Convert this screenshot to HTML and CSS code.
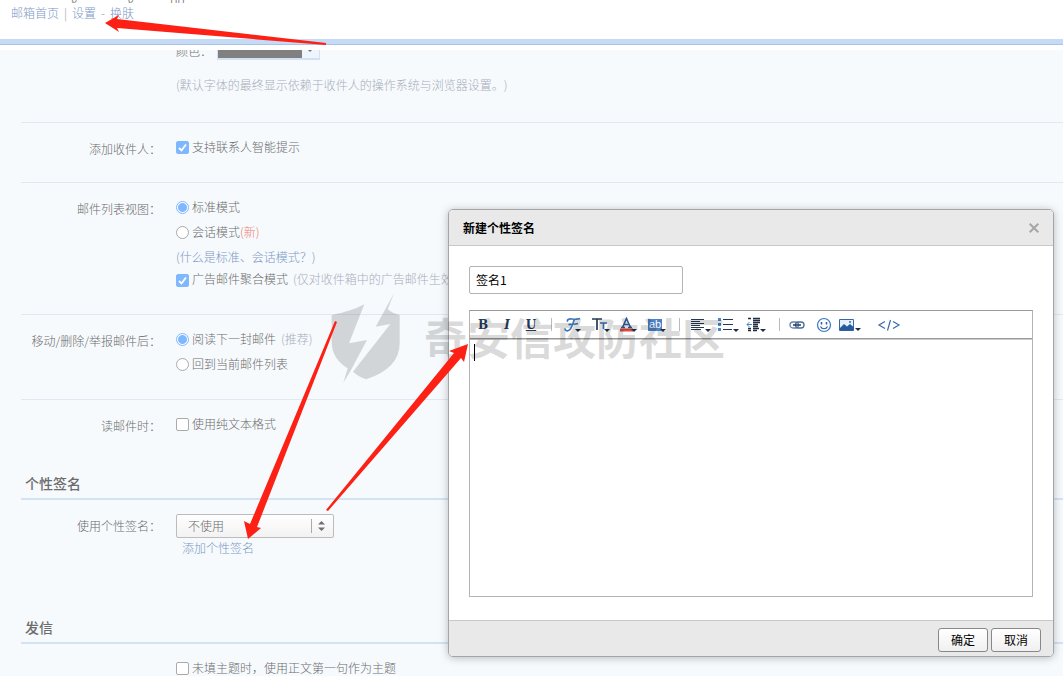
FILE: index.html
```html
<!DOCTYPE html>
<html lang="zh-CN">
<head>
<meta charset="utf-8">
<title>邮箱设置</title>
<link rel="stylesheet" href="styles.css">
</head>
<body>
<header class="top">
  <div class="account"><span>g</span><span>g</span><span>pp</span></div>
  <nav class="nav"><a href="#">邮箱首页</a><span>|</span><a href="#">设置</a><span>-</span><a href="#">换肤</a></nav>
</header>
<main class="settings">
  <div class="row row-color">
    <span class="label">颜色：</span>
    <div class="field">
      <button class="swatch" type="button" aria-label="颜色"><span class="swatch-fill"></span><span class="swatch-arrow"></span></button>
      <p class="muted note">(默认字体的最终显示依赖于收件人的操作系统与浏览器设置。)</p>
    </div>
  </div>
  <div class="row">
    <span class="label">添加收件人：</span>
    <div class="field"><label class="option"><input type="checkbox" checked><span>支持联系人智能提示</span></label></div>
  </div>
  <div class="row">
    <span class="label">邮件列表视图：</span>
    <div class="field">
      <label class="option"><input type="radio" name="view" checked><span>标准模式</span></label>
      <label class="option"><input type="radio" name="view"><span>会话模式</span><span class="new">(新)</span></label>
      <a class="help" href="#">(什么是标准、会话模式？)</a>
      <label class="option compact"><input type="checkbox" checked><span>广告邮件聚合模式</span><span class="muted gap">(仅对收件箱中的广告邮件生效)</span></label>
    </div>
  </div>
  <div class="row">
    <span class="label">移动/删除/举报邮件后：</span>
    <div class="field">
      <label class="option"><input type="radio" name="after" checked><span>阅读下一封邮件</span><span class="muted gap">(推荐)</span></label>
      <label class="option"><input type="radio" name="after"><span>回到当前邮件列表</span></label>
    </div>
  </div>
  <div class="row">
    <span class="label">读邮件时：</span>
    <div class="field"><label class="option"><input type="checkbox"><span>使用纯文本格式</span></label></div>
  </div>
  <h2 class="section">个性签名</h2>
  <div class="row row-sign">
    <label class="label" for="sign">使用个性签名：</label>
    <div class="field">
      <div class="select-wrap">
        <select id="sign"><option>不使用</option></select>
        <svg class="select-icon" width="20" height="16" viewBox="0 0 20 16"><path d="M.5 1v14" stroke="#aaa"/><path d="M7 6.500L10.500 3 14 6.500zM7 9.500L10.500 13 14 9.500z" fill="#707070"/></svg>
      </div>
      <a class="add" href="#">添加个性签名</a>
    </div>
  </div>
  <h2 class="section">发信</h2>
  <div class="row row-send">
    <span></span>
    <div class="field"><label class="option"><input type="checkbox"><span>未填主题时，使用正文第一句作为主题</span></label></div>
  </div>
</main>

<section class="dialog" role="dialog" aria-labelledby="dialog-title">
  <header class="dialog-head">
    <h1 id="dialog-title">新建个性签名</h1>
    <button class="close" type="button" aria-label="关闭"><svg width="10" height="10" viewBox="0 0 10 10"><path d="M.7.700l8.600 8.600M9.300.700L.700 9.300" stroke="#a6a6a6" stroke-width="2"/></svg></button>
  </header>
  <div class="dialog-body">
    <input class="name" type="text" value="签名1" aria-label="签名名称">
    <div class="editor">
      <div class="toolbar">
        <button class="tool serif bold" type="button" aria-label="加粗">B</button>
        <button class="tool serif italic" type="button" aria-label="斜体">I</button>
        <button class="tool serif under" type="button" aria-label="下划线">U</button>
        <span class="sep"></span>
        <button class="tool wide" type="button" aria-label="字体"><svg width="20" height="16" viewBox="0 0 20 16"><path d="M5 4.500C3 3 6 1.500 9 2c3 .500 5 .500 8-.500M11.500 2.500C10 5 9 12.500 5.500 13.500 3.500 14.300 1.500 13 2.500 11.500M5.500 7.800C9 6.500 11 8 15 6.500" fill="none" stroke="#3d78bd" stroke-width="1.700"/><path d="M12 12h6l-3 3z" fill="#1d2f4b"/></svg></button>
        <button class="tool wide" type="button" aria-label="字号"><svg width="20" height="16" viewBox="0 0 20 16"><path d="M1 2h10M6 2v11" stroke="#263a56" stroke-width="1.700"/><path d="M9 6h7M12.500 6v6" stroke="#3976bd" stroke-width="1.700"/><path d="M13 12h6l-3 3z" fill="#1d2f4b"/></svg></button>
        <button class="tool wide" type="button" aria-label="文字颜色"><svg width="20" height="16" viewBox="0 0 20 16"><path d="M3.500 10.500L7.500 1.500l4 9M5 7.500h5M2 10.500h4M9 10.500h4" fill="none" stroke="#315f9c" stroke-width="1.600"/><path d="M1 11.500h13v3H1z" fill="#e14942"/><path d="M12 12h6l-3 3z" fill="#1d2f4b"/></svg></button>
        <button class="tool wide" type="button" aria-label="背景颜色"><span class="mark">ab</span><svg class="mark-arrow" width="6" height="3" viewBox="0 0 6 3"><path d="M0 0h6L3 3z" fill="#1d2f4b"/></svg></button>
        <span class="sep"></span>
        <button class="tool wide" type="button" aria-label="对齐"><svg width="22" height="16" viewBox="0 0 22 16"><path d="M1 2.500h13M1 4.500h9M1 6.500h13M1 8.500h9M1 10.500h13M1 12.500h10" stroke="#25384f"/><path d="M15 12h6l-3 3z" fill="#1d2f4b"/></svg></button>
        <button class="tool wide" type="button" aria-label="列表"><svg width="22" height="16" viewBox="0 0 22 16"><path d="M5 2.500h10M5 7.500h10M5 12.500h9" stroke="#25384f"/><path d="M0 1h3v3H0zM0 6h3v3H0zM0 11h3v3H0z" fill="#4b87c8"/><path d="M15 12h6l-3 3z" fill="#1d2f4b"/></svg></button>
        <button class="tool wide" type="button" aria-label="缩进"><svg width="22" height="16" viewBox="0 0 22 16"><path d="M2 1.500h3M7 1.500h7M7 3.500h7M7 5.500h7M7 7.500h5M7 9.500h5M2 11.500h3M7 11.500h6M2 13.500h3M7 13.500h4" stroke="#1e2d40" stroke-width="1.300"/><path d="M6 7.500H1M3.500 5L1 7.500 3.500 10" fill="none" stroke="#4b87c8"/><path d="M14 12h6l-3 3z" fill="#1d2f4b"/></svg></button>
        <span class="sep"></span>
        <button class="tool link" type="button" aria-label="链接"><svg width="16" height="16" viewBox="0 0 16 16"><rect x="1" y="5" width="8.500" height="6" rx="3" fill="none" stroke="#6784ac" stroke-width="1.300"/><rect x="6.500" y="5" width="8.500" height="6" rx="3" fill="none" stroke="#4a6a97" stroke-width="1.300"/><path d="M4 8h8" stroke="#263b58" stroke-width="1.500"/></svg></button>
        <button class="tool" type="button" aria-label="表情"><svg width="16" height="16" viewBox="0 0 16 16"><circle cx="8" cy="8" r="6.500" fill="#f8fbff" stroke="#3e77bd" stroke-width="1.200"/><path d="M5.500 5v2.500M10.500 5v2.500" stroke="#315f9c" stroke-width="1.500"/><path d="M4.500 9.500c1.500 3 5.500 3 7 0" fill="none" stroke="#315f9c" stroke-width="1.200"/></svg></button>
        <button class="tool wide" type="button" aria-label="图片"><svg width="22" height="16" viewBox="0 0 22 16"><path d="M.500 2.500h14v11H.500z" fill="#e8f2fe" stroke="#3569aa"/><path d="M1 11l4-4 3 2.500L11 7l3.500 3v3.500H1z" fill="#285b9c"/><circle cx="11" cy="5" r="1" fill="#3569aa"/><path d="M16 11h6l-3 3z" fill="#1d2f4b"/></svg></button>
        <button class="tool code" type="button" aria-label="源代码"><svg width="24" height="16" viewBox="0 0 24 16"><path d="M8 4.500L2 8l6 3.500M16 4.500L22 8l-6 3.500M13.500 3l-3 10.500" fill="none" stroke="#3a6aae" stroke-width="1.200"/></svg></button>
      </div>
      <div class="canvas" role="textbox" aria-label="签名内容"><span class="caret"></span></div>
    </div>
  </div>
  <footer class="dialog-foot"><button class="btn" type="button">确定</button><button class="btn" type="button">取消</button></footer>
</section>

<div class="watermark">
  <svg width="90" height="95" viewBox="0 0 270 285"><path d="M20 75Q80 64 118 43L72 160l54-10L78 240 55 278 68 235Q20 205 20 155zM207 10L188 58q14 12 36 17v85q0 75-100 108-24-8-40-23L196 102l-44 8z" fill="currentColor"/></svg>
  <span>奇安信攻防社区</span>
</div>
<svg class="arrows" width="1063" height="676" viewBox="0 0 1063 676" fill="#fc2114">
  <path d="M105 23L119 15 117 19 326 43v2L117 28l2 4z"/>
  <path d="M248 539L244 521l6 3L335 321l2 1L257 527l4 1z"/>
  <path d="M468 344L449 351l5 2L326 510l2 1L461 358l3 4z"/>
</svg>
</body>
</html>
```

FILE: styles.css
```css
* { box-sizing: border-box; }
body {
  position: relative;
  height: 100vh;
  margin: 0;
  overflow: hidden;
  background: #f6fafd;
  color: #6c6c6c;
  font: 12px/20px "Noto Sans CJK SC", sans-serif;
  font-weight: 300;
  text-spacing-trim: space-all;
}
h1, h2, p { margin: 0; }
a { color: #7c98c4; text-decoration: none; }
button, input, select { font: inherit; }
.top {
  height: 45px;
  background: #fff;
  border-bottom: 1px solid #a9c4e6;
  box-shadow: inset 0 -5px #c5daf5;
}
.account {
  display: flex;
  height: 3px;
  padding-left: 71px;
  gap: 50px;
  overflow: hidden;
  line-height: 0;
  color: #666;
}
.account span:last-child { margin-left: -14px; }
.nav { display: flex; gap: 5px; padding-left: 11px; color: #9a9aa5; }
.settings {
  border-top: 5px solid #fff;
  padding-left: 21px;
  overflow: hidden;
}
.row {
  display: grid;
  grid-template-columns: 140px 1fr;
  column-gap: 15px;
  padding: 12px 0 22px;
  border-top: 1px solid #e0e8f1;
}
.label { text-align: right; padding-top: 4px; }
.field { display: flex; flex-direction: column; align-items: flex-start; }
.option { display: flex; align-items: center; height: 25px; }
.option span { padding-bottom: 2px; }
.option input {
  appearance: none;
  width: 13px;
  height: 13px;
  margin: 0 3px 0 0;
  border: 1px solid #aaa;
  border-radius: 2px;
  background: #fff;
}
.option input[type="radio"] { border-radius: 50%; }
.option input[type="checkbox"]:checked {
  border-color: #80b8ff;
  background: #80b8ff url("data:image/svg+xml,%3Csvg xmlns='http://www.w3.org/2000/svg' viewBox='0 0 11 11'%3E%3Cpath d='M2 6l2.500 2.500L9 2.500' fill='none' stroke='white' stroke-width='1.800'/%3E%3C/svg%3E");
}
.option input[type="radio"]:checked {
  border-color: #80b8ff;
  background: radial-gradient(circle, #80b8ff 4px, #fff 5px);
}
.option.compact { height: 20px; margin-bottom: 2px; }
.help { line-height: 24px; padding-bottom: 1px; }
.muted { color: #a8aebb; }
.gap { margin-left: 5px; }
.new { color: #ee7f6c; }
.row-color { margin-top: -9px; padding: 0 0 27px; border: 0; }
.row-color .label {
  padding: 0;
  text-align: left;
  grid-column: 2;
  grid-row: 1;
}
.row-color .field { grid-column: 2; grid-row: 1; }
.swatch {
  display: flex;
  height: 19px;
  width: 103px;
  margin-left: 41px;
  padding: 0;
  border: solid #d3e1f5;
  border-width: 1px 1px 2px;
  background: #eef5fc;
}
.swatch-fill { width: 84px; height: 100%; background: #808080; }
.swatch-arrow {
  margin: 8px 0 0 6px;
  border: 2px solid transparent;
  border-top-color: #777;
}
.note { margin-top: 15px; }
.section {
  margin-top: 11px;
  padding: 0 0 2px 4px;
  border-bottom: 2px solid #d3e3f5;
  font-size: 14px;
  line-height: 26px;
  font-weight: 500;
}
.row-sign { border: 0; padding: 14px 0 45px; }
.row-sign .label { padding-top: 2px; }
.select-wrap { display: grid; width: 158px; }
.select-wrap > * { grid-area: 1 / 1; }
.select-wrap select {
  appearance: none;
  height: 24px;
  padding: 0 11px;
  border: 1px solid #bcbcbc;
  border-radius: 2px;
  background: linear-gradient(#fff, #f2f2f2);
  color: #6c6c6c;
}
.select-icon { place-self: center end; margin-right: 3px; pointer-events: none; }
.add { padding-left: 6px; }
.row-send { border: 0; padding-bottom: 0; }

.dialog {
  position: absolute;
  top: 209px;
  left: 448px;
  right: 9px;
  border: 1px solid #a5a5a5;
  border-radius: 5px;
  background: #fff;
  box-shadow: 0 1px 8px rgba(0, 0, 0, .25);
  color: #000;
  font-weight: 400;
  overflow: hidden;
}
.dialog-head {
  display: flex;
  align-items: center;
  justify-content: space-between;
  height: 36px;
  padding: 0 14px;
  background: #e9e9e9;
  border-bottom: 1px solid #c8c8c8;
}
.dialog-head h1 { font-size: 12px; font-weight: 700; }
.close { display: flex; padding: 0; border: 0; background: none; }
.dialog-body { padding: 20px 20px 23px; }
.name {
  display: block;
  width: 214px;
  height: 28px;
  padding: 0 6px 2px;
  border: 1px solid #b5b5b5;
  border-radius: 2px;
  color: #000;
}
.editor { margin-top: 16px; border: 1px solid #b4b4b4; border-top-color: #999; }
.toolbar {
  display: flex;
  align-items: center;
  height: 28px;
  padding-left: 5px;
  border-bottom: 1px solid #999;
  box-shadow: 0 1px #ccc;
}
.tool {
  display: flex;
  justify-content: center;
  align-items: center;
  flex: none;
  width: 25px;
  height: 22px;
  padding: 0;
  border: 0;
  background: none;
  color: #263a56;
}
.tool.serif { width: 16px; margin-right: 8px; font: bold 12px/16px "DejaVu Serif", serif; }
.tool.italic { font-style: italic; }
.tool.under { text-decoration: underline; }
.tool.wide { width: 28px; }
.tool.link { width: 20px; margin-right: 4px; }
.tool.code { margin-left: 12px; }
.sep { width: 1px; height: 13px; margin: 0 7px 0 4px; background: #bbb; }
.wide + .sep { margin-left: 8px; }
.mark {
  width: 14px;
  height: 12px;
  background: #4d82c6;
  color: #fff;
  font: 11px/11px "Liberation Sans", sans-serif;
}
.mark-arrow { align-self: flex-end; margin: 0 0 4px -2px; }
.canvas { height: 257px; padding: 5px 4px; }
.caret { display: block; width: 1px; height: 17px; background: #000; }
.dialog-foot {
  display: flex;
  justify-content: flex-end;
  gap: 3px;
  padding: 7px 12px 4px;
  border-top: 1px solid #c8c8c8;
  background: #e9e9e9;
}
.btn {
  width: 50px;
  height: 24px;
  padding: 0;
  border: 1px solid #888;
  border-radius: 3px;
  background: linear-gradient(#fff, #f0f0f0);
  color: #000;
}
.watermark {
  position: absolute;
  top: 290px;
  left: 325px;
  display: flex;
  align-items: center;
  gap: 9px;
  color: #000;
  opacity: .14;
  font-size: 43px;
  line-height: 60px;
  font-weight: 700;
  white-space: nowrap;
  pointer-events: none;
}
.watermark span { padding-bottom: 4px; }
.arrows { position: absolute; top: 0; left: 0; pointer-events: none; }
```
